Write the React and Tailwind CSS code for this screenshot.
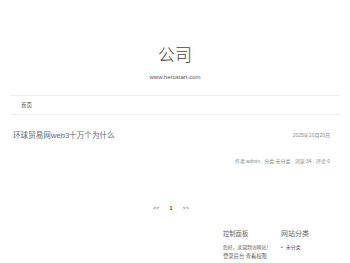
export default function App() {
  return (
    <div
      className="w-[350px] h-[263px] bg-white overflow-hidden text-[#666]"
      style={{ fontFamily: '"Liberation Sans", "Noto Sans CJK SC", sans-serif' }}
    >
      <header className="pt-[47px] text-center">
        <div className="text-[17px] leading-[18px] font-light text-[#444]">公司</div>
        <div className="mt-[9px] text-[6px] leading-[6px] text-[#555]">www.herostart.com</div>
      </header>
      <nav className="mx-[10px] mt-[15px] h-[20px] border-y border-[#eee] flex items-center pl-[11px] text-[5.5px] text-[#444]">
        首页
      </nav>
      <article className="pl-[13px] pr-[20px]">
        <div className="mt-[16px] flex items-center justify-between">
          <h2 className="text-[7.6px] leading-[10px] text-[#666]">环球贸易网web3十万个为什么</h2>
          <span className="text-[5px] text-[#888]">2025年10月20日</span>
        </div>
        <div className="mt-[17px] text-right text-[5px] text-[#888]">
          作者:admin , 分类:未分类 , 浏览:34 , 评论:0
        </div>
      </article>
      <div className="mt-[38px] pr-[8px] flex justify-center items-center gap-[10px] text-[5.5px] text-[#666]">
        <span>&lt;&lt;</span>
        <span className="text-[#c00] font-bold">1</span>
        <span>&gt;&gt;</span>
      </div>
      <aside className="mt-[18px] ml-[223px] flex gap-[10px]">
        <div className="w-[48px]">
          <div className="text-[6.3px] leading-[8px] text-[#666]">控制面板</div>
          <div className="mt-[5px] text-[4.8px] leading-[9px] text-[#555] whitespace-nowrap">您好，欢迎到访网站！</div>
          <div className="text-[5.3px] leading-[9px] text-[#555] whitespace-nowrap">登录后台 查看权限</div>
        </div>
        <div>
          <div className="text-[7px] leading-[8px] text-[#666]">网站分类</div>
          <div className="mt-[5px] flex items-center gap-[3px] text-[5px] leading-[9px] text-[#555]">
            <span className="text-[5px]">•</span>
            <span>未分类</span>
          </div>
        </div>
      </aside>
    </div>
  );
}
